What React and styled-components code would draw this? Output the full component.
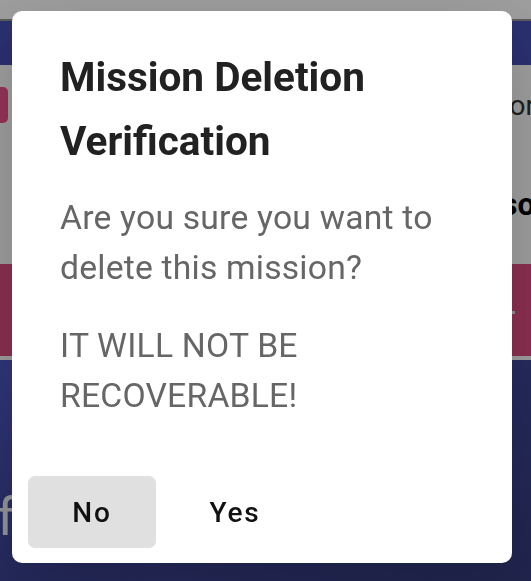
import React from "react";
import styled, { createGlobalStyle } from "styled-components";

const GlobalStyle = createGlobalStyle`
  html, body {
    margin: 0;
    padding: 0;
    width: 531px;
    height: 581px;
    overflow: hidden;
    font-family: Roboto, "Liberation Sans", sans-serif;
  }
  #root {
    height: 100%;
  }
`;

const Page = styled.div`
  height: 581px;
  display: flex;
  flex-direction: column;
  overflow: hidden;
  background: #ffffff;
`;

const StatusBar = styled.div`
  height: 19px;
  background: #ffffff;
  border-bottom: 2px solid #949494;
`;

const Header = styled.div`
  height: 44px;
  background: #454db5;
`;

const Card = styled.div`
  height: 199px;
  background: #ffffff;
  display: flex;
  flex-direction: column;
  padding-top: 22px;
  box-sizing: border-box;
`;

const Row = styled.div`
  display: flex;
  align-items: center;
  justify-content: space-between;
  height: ${(p) => p.$h || 36}px;
  margin-top: ${(p) => p.$top || 0}px;
`;

const Check = styled.div`
  width: 36px;
  height: 36px;
  margin-left: -28px;
  border-radius: 5px;
  background: #f2528f;
  display: flex;
  align-items: center;
  justify-content: center;
`;

const RowText = styled.span`
  font-size: ${(p) => p.$size}px;
  font-weight: ${(p) => p.$weight || 400};
  color: ${(p) => p.$color || "#333"};
  margin-right: -4px;
  white-space: nowrap;
`;

const PinkBand = styled.div`
  height: 92px;
  background: #e04c81;
  display: flex;
  align-items: center;
  justify-content: flex-end;
  padding-right: 16px;
`;

const Tick = styled.div`
  width: 4px;
  height: 3px;
  margin-top: 4px;
  background: #e6e6e6;
`;

const Divider = styled.div`
  height: 4px;
  background: #ffffff;
`;

const Footer = styled.div`
  flex: 1;
  background: linear-gradient(160deg, #4d58c6 0%, #3c4496 50%, #353c7e 100%);
  padding-top: 128px;
`;

const FooterTitle = styled.div`
  font-size: 52px;
  color: rgba(255, 255, 255, 0.92);
  margin-left: -3px;
  line-height: 60px;
`;

const Backdrop = styled.div`
  position: fixed;
  inset: 0;
  background: rgba(0, 0, 0, 0.38);
  display: flex;
  align-items: flex-start;
  padding: 11px 0 0 12px;
`;

const Dialog = styled.div`
  width: 500px;
  background: #ffffff;
  border-radius: 10px;
  box-shadow: 0 22px 70px rgba(0, 0, 0, 0.2);
  display: flex;
  flex-direction: column;
`;

const Title = styled.h2`
  margin: 0;
  padding: 34px 48px 0;
  font-size: 40.5px;
  line-height: 64px;
  font-weight: 700;
  color: #212121;
`;

const Content = styled.div`
  padding: 20px 48px 55px;
  display: flex;
  flex-direction: column;
  gap: 28px;
`;

const Text = styled.p`
  margin: 0;
  font-size: 33.7px;
  line-height: 50px;
  color: #666666;
  letter-spacing: 0.2px;
`;

const Actions = styled.div`
  display: flex;
  gap: 15px;
  padding: 0 16px 15px;
`;

const Button = styled.button`
  width: 128px;
  height: 72px;
  border: none;
  border-radius: 7px;
  background: ${(p) => (p.$filled ? "#e0e0e0" : "transparent")};
  font-family: Roboto, "Liberation Sans", sans-serif;
  font-size: 28px;
  font-weight: 500;
  letter-spacing: 1.8px;
  color: #111111;
  cursor: pointer;
`;

export default function App() {
  return (
    <>
      <GlobalStyle />
      <Page>
        <StatusBar />
        <Header />
        <Card>
          <Row>
            <Check>
              <svg width="24" height="24" viewBox="0 0 24 24">
                <path d="M4 12.5l5 5L20 6" fill="none" stroke="#fff" strokeWidth="3" />
              </svg>
            </Check>
            <RowText $size={28}>or</RowText>
          </Row>
          <Row $top={66} $h={30}>
            <span />
            <RowText $size={31} $weight={700} $color="#000">so</RowText>
          </Row>
        </Card>
        <PinkBand>
          <Tick />
        </PinkBand>
        <Divider />
        <Footer>
          <FooterTitle>fo</FooterTitle>
        </Footer>
      </Page>
      <Backdrop>
        <Dialog>
          <Title>Mission Deletion Verification</Title>
          <Content>
            <Text>Are you sure you want to delete this mission?</Text>
            <Text>IT WILL NOT BE RECOVERABLE!</Text>
          </Content>
          <Actions>
            <Button $filled>No</Button>
            <Button>Yes</Button>
          </Actions>
        </Dialog>
      </Backdrop>
    </>
  );
}
